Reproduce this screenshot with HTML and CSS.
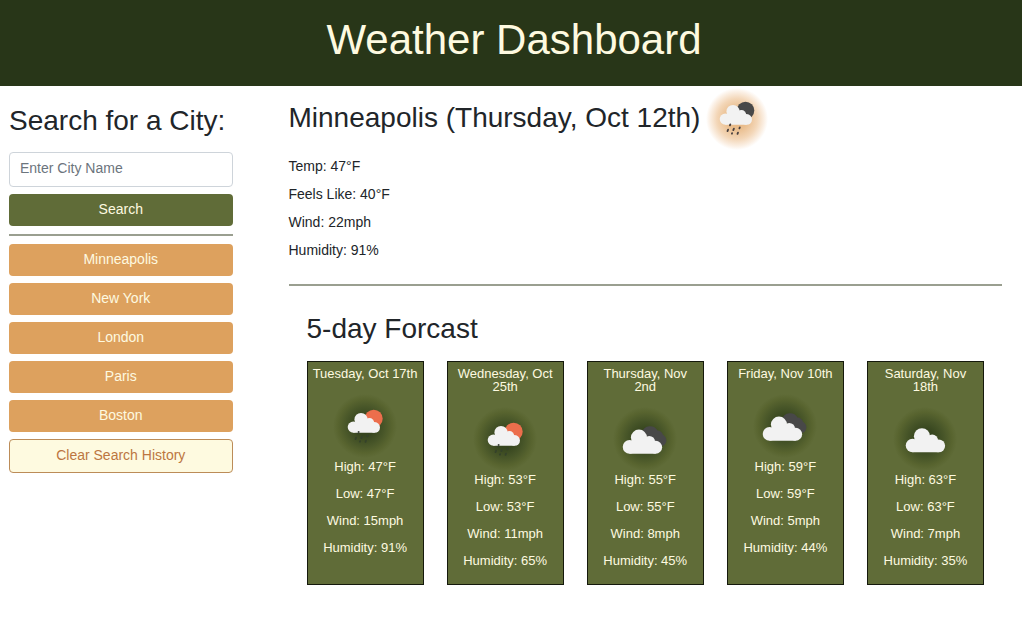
FILE: index.html
```
<!DOCTYPE html>
<html lang="en">
<head>
<meta charset="utf-8">
<meta name="viewport" content="width=device-width, initial-scale=1">
<title>Weather Dashboard</title>
<link rel="stylesheet" href="styles.css">
</head>
<body>
<svg class="sprite" width="0" height="0" aria-hidden="true">
  <defs>
    <g id="cloud">
      <circle cx="10.3" cy="23.1" r="5.6"/>
      <circle cx="18" cy="15.5" r="6.6"/>
      <circle cx="26.4" cy="18.9" r="4.8"/>
      <circle cx="31.7" cy="23.4" r="5.3"/>
      <path d="M10.3 28.7v-9l5-2.5 8-1.5 3.4 1.5 5 2.8v8.7z"/>
    </g>
    <g id="drops" stroke-width="1.8" stroke-linecap="round">
      <path d="M15.3 28.4l-.4 1M13.1 33.6l-.6 1.5M18.9 32.6l-.6 1.5M24.8 31.4l-.4 1M17.1 37.2l-.2.5M23 36.6l-.5 1.2"/>
    </g>
  </defs>
</svg>

<header class="banner"><h1>Weather Dashboard</h1></header>

<div class="layout">
  <aside class="sidebar">
    <form class="search">
      <h2><label for="city">Search for a City:</label></h2>
      <input class="city-input" id="city" type="text" placeholder="Enter City Name">
      <button class="btn btn-search" type="button">Search</button>
    </form>
    <hr>
    <div class="history">
      <button class="btn" type="button">Minneapolis</button>
      <button class="btn" type="button">New York</button>
      <button class="btn" type="button">London</button>
      <button class="btn" type="button">Paris</button>
      <button class="btn" type="button">Boston</button>
      <button class="btn btn-clear" type="button">Clear Search History</button>
    </div>
  </aside>

  <main class="content">
    <section class="current">
      <div class="current-title">
        <h2>Minneapolis (Thursday, Oct 12th)</h2>
        <svg class="icon icon-warm" viewBox="0 0 44 44" role="img" aria-label="Rain at night">
          <circle class="moon" cx="30.5" cy="14.5" r="8.8"/>
          <use class="cloud" href="#cloud"/>
          <use class="drops" href="#drops"/>
        </svg>
      </div>
      <p>Temp: 47°F</p>
      <p>Feels Like: 40°F</p>
      <p>Wind: 22mph</p>
      <p>Humidity: 91%</p>
    </section>
    <hr>
    <section class="forecast">
      <h2>5-day Forcast</h2>
      <div class="cards">
        <article class="card">
          <h3>Tuesday, Oct 17th</h3>
          <svg class="icon" viewBox="0 0 44 44" role="img" aria-label="Rain">
            <circle class="sun" cx="30.7" cy="14.7" r="9"/>
            <use class="drops drops-dim" href="#drops"/>
            <use class="cloud" href="#cloud"/>
            <circle class="spot" cx="15.6" cy="28" r="1"/>
          </svg>
          <p>High: 47°F</p><p>Low: 47°F</p><p>Wind: 15mph</p><p>Humidity: 91%</p>
        </article>
        <article class="card">
          <h3>Wednesday, Oct 25th</h3>
          <svg class="icon" viewBox="0 0 44 44" role="img" aria-label="Rain">
            <circle class="sun" cx="30.7" cy="14.7" r="9"/>
            <use class="drops drops-dim" href="#drops"/>
            <use class="cloud" href="#cloud"/>
            <circle class="spot" cx="15.6" cy="28" r="1"/>
          </svg>
          <p>High: 53°F</p><p>Low: 53°F</p><p>Wind: 11mph</p><p>Humidity: 65%</p>
        </article>
        <article class="card">
          <h3>Thursday, Nov 2nd</h3>
          <svg class="icon" viewBox="0 0 44 44" role="img" aria-label="Broken clouds">
            <path class="cloud-back" d="M19 15a8.6 8.6 0 0 1 15.5-1.5 6 6 0 0 1 5.4 4.3 6.2 6.2 0 0 1 .8 10.7L36 29z"/>
            <use class="cloud" href="#cloud" transform="translate(-6 1.7) scale(1.22)"/>
          </svg>
          <p>High: 55°F</p><p>Low: 55°F</p><p>Wind: 8mph</p><p>Humidity: 45%</p>
        </article>
        <article class="card">
          <h3>Friday, Nov 10th</h3>
          <svg class="icon" viewBox="0 0 44 44" role="img" aria-label="Broken clouds">
            <path class="cloud-back" d="M19 15a8.6 8.6 0 0 1 15.5-1.5 6 6 0 0 1 5.4 4.3 6.2 6.2 0 0 1 .8 10.7L36 29z"/>
            <use class="cloud" href="#cloud" transform="translate(-6 1.7) scale(1.22)"/>
          </svg>
          <p>High: 59°F</p><p>Low: 59°F</p><p>Wind: 5mph</p><p>Humidity: 44%</p>
        </article>
        <article class="card">
          <h3>Saturday, Nov 18th</h3>
          <svg class="icon" viewBox="0 0 44 44" role="img" aria-label="Cloudy">
            <use class="cloud" href="#cloud" transform="translate(-3 .3) scale(1.22)"/>
          </svg>
          <p>High: 63°F</p><p>Low: 63°F</p><p>Wind: 7mph</p><p>Humidity: 35%</p>
        </article>
      </div>
    </section>
  </main>
</div>
</body>
</html>
```
FILE: styles.css
```
* { box-sizing: border-box; }

body {
  margin: 0;
  background: #fff;
  color: #212529;
  font: 14px/20px "Liberation Sans", Arial, sans-serif;
}

h1, h2, h3, p { margin: 0; font-weight: 400; }
h2 { font-size: 28px; line-height: 34px; }

hr {
  margin: 0;
  border: 0;
  border-top: 2px solid #9a9f90;
}

.sprite { position: absolute; }

.banner {
  padding: 15px 0 21px 6px;
  background: #283618;
  color: #fefae0;
  text-align: center;
}
.banner h1 { font-size: 42px; line-height: 50px; }

.layout {
  display: grid;
  grid-template-columns: 1fr 3fr;
}

.sidebar { padding: 18px 23px 18px 9px; }
.search { display: grid; gap: 7px; }
.search h2 { margin-bottom: 7px; }
.sidebar hr { margin: 8px 0; }
.history { display: grid; gap: 7px; }

.city-input {
  width: 100%;
  height: 35px;
  padding: 0 10px 3px;
  border: 1px solid #ced4da;
  border-radius: 4px;
  background: #fff;
  color: #495057;
  font: inherit;
}
.city-input::placeholder { color: #6c757d; opacity: 1; }

.btn {
  height: 32px;
  padding: 0 11px 2px;
  border: 0;
  border-radius: 4px;
  background: #dda15e;
  color: #fefae0;
  font: inherit;
  cursor: pointer;
}
.btn-search { background: #606c38; }
.btn-clear {
  height: 34px;
  border: 1px solid #bc8c58;
  background: #fefae0;
  color: #bc7640;
}

.content { padding: 0 20px 24px 33px; }

.current-title {
  display: flex;
  align-items: center;
  gap: 5px;
  height: 64px;
  margin-bottom: 6px;
}
.current p { margin-bottom: 8px; }
.content hr { margin-top: 24px; }

.forecast { padding: 26px 18px 0; }
.cards {
  display: grid;
  grid-template-columns: repeat(5, 1fr);
  gap: 23px;
  margin-top: 15px;
}
.card {
  display: flex;
  flex-direction: column;
  align-items: center;
  padding: 5px;
  border: 1px solid #15190c;
  background: #606c38;
  color: #fefae0;
  text-align: center;
}
.card h3 { margin-bottom: 14px; font-size: 13px; line-height: 13px; }
.card p { margin-bottom: 10px; font-size: 13px; line-height: 17px; }

.icon {
  flex: none;
  width: 64px;
  height: 64px;
  padding: 10px;
  overflow: visible;
  background: radial-gradient(circle 32px, #303e1c 0%, #37461f 30%, #475528 58%, #58642f 84%, #606c38 100%);
}
.icon-warm {
  background: radial-gradient(circle 31px at 32px 33px, #e6b27a 0%, #eabf90 35%, #f3d6b7 65%, #fbf0e5 88%, #fff 100%);
}

.cloud { fill: #f2f2f2; }
.cloud-back, .moon { fill: #484848; }
.sun { fill: #ec6e4c; }
.drops { stroke: #484040; }
.drops-dim { stroke: #35422a; }
.spot { fill: #3c4038; }
```
